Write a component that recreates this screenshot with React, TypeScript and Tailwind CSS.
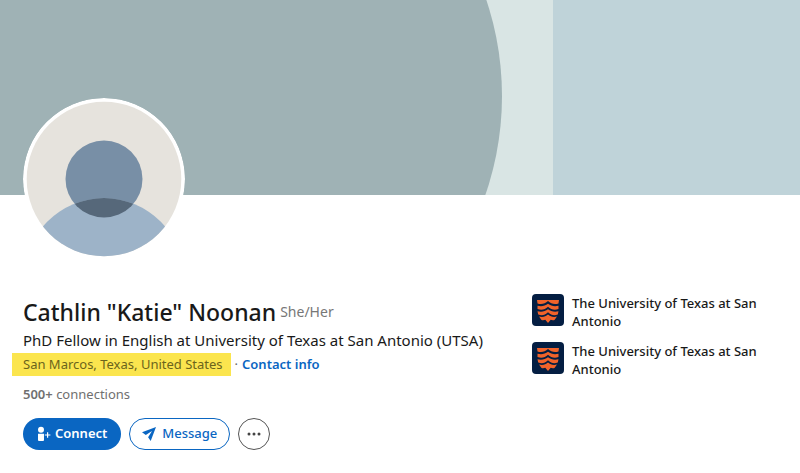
import type { ReactNode } from "react";

type School = {
  id: number;
  name: string;
};

const SCHOOLS: School[] = [
  { id: 1, name: "The University of Texas at San Antonio" },
  { id: 2, name: "The University of Texas at San Antonio" },
];

function CoverArt() {
  return (
    <svg
      className="block h-[195px] w-full"
      viewBox="0 0 800 195"
      preserveAspectRatio="xMidYMid slice"
      aria-hidden="true"
    >
      <rect width="800" height="195" fill="#d9e5e4" />
      <rect x="553" width="247" height="195" fill="#bfd3d9" />
      <circle cx="200" cy="96" r="302" fill="#9fb2b5" />
    </svg>
  );
}

function Avatar() {
  return (
    <svg
      className="relative -mt-[97px] block size-[162px] rounded-full"
      viewBox="0 0 162 162"
      role="img"
      aria-label="Profile photo"
    >
      <defs>
        <clipPath id="avatar-face">
          <circle cx="81" cy="81" r="77.3" />
        </clipPath>
        <clipPath id="avatar-head">
          <circle cx="81" cy="81" r="38.5" />
        </clipPath>
      </defs>
      <circle cx="81" cy="81" r="81" fill="#fff" />
      <g clipPath="url(#avatar-face)">
        <rect width="162" height="162" fill="#e6e3dd" />
        <circle cx="81" cy="81" r="38.5" fill="#788fa6" />
        <circle cx="81" cy="180.5" r="80.4" fill="#9db3c8" />
        <g clipPath="url(#avatar-head)">
          <circle cx="81" cy="180.5" r="80.4" fill="#56687a" />
        </g>
      </g>
    </svg>
  );
}

function SchoolLogo() {
  return (
    <svg className="size-8 shrink-0 rounded" viewBox="0 0 32 32" aria-hidden="true">
      <rect width="32" height="32" fill="#041e42" />
      <g fill="#f1632a">
        <path d="M5 6h22l-.5 3.500c-4 1.200-7.500.4-10.500-2.500-3 2.900-6.500 3.700-10.500 2.500z" />
        <path d="M5.500 11.700c4 1 7.500.3 10.500-2 3 2.300 6.500 3 10.500 2v3.300c-4 1.400-7.500.6-10.500-2.300-3 2.900-6.500 3.700-10.500 2.300z" />
        <path d="M5.500 17.200c4 1 7.500.3 10.500-2 3 2.300 6.500 3 10.500 2L25.800 20.500c-3.800 1.400-6.800.6-9.800-2.200-3 2.800-6 3.600-9.800 2.200z" />
        <path d="M7 22.500c3.500 1 6.500.2 9-2 2.500 2.200 5.500 3 9 2L22.500 26c-1.500.4-2.800.2-3.800-.3L16 29l-2.700-3.300c-1 .5-2.300.7-3.800.3z" />
      </g>
    </svg>
  );
}

function ConnectIcon() {
  return (
    <svg className="h-4 w-3.5" viewBox="0 0 14 16" fill="currentColor" aria-hidden="true">
      <circle cx="4" cy="3.800" r="3" />
      <path d="M1 7.800h6V14a1 1 0 0 1-1 1H2a1 1 0 0 1-1-1z" />
      <path d="M10 6.200h1.200v2.200h2.200v1.200h-2.200v2.200H10V9.600H7.800V8.400H10z" />
    </svg>
  );
}

function SendIcon() {
  return (
    <svg className="size-3.5" viewBox="0 0 14 14" fill="currentColor" aria-hidden="true">
      <path d="M14 0 0 5.300l3.800 2.600L10 4 6.100 10.200 8.700 14z" />
    </svg>
  );
}

function DotsIcon() {
  return (
    <svg className="h-4 w-3.5" viewBox="0 0 14 16" fill="currentColor" aria-hidden="true">
      <circle cx="2" cy="8" r="1.500" />
      <circle cx="7" cy="8" r="1.500" />
      <circle cx="12" cy="8" r="1.500" />
    </svg>
  );
}

function PillButton({ primary = false, children }: { primary?: boolean; children: ReactNode }) {
  return (
    <button
      type="button"
      className={
        primary
          ? "flex h-8 items-center gap-1 rounded-full bg-[#0a66c2] px-3.5 text-[13px] font-semibold text-white"
          : "flex h-8 items-center gap-1.5 rounded-full border border-[#0a66c2] px-3 text-[13px] font-medium text-[#0a66c2]"
      }
    >
      {children}
    </button>
  );
}

export default function App() {
  return (
    <main className="min-h-screen bg-white font-['Noto_Sans',sans-serif] text-[#191919]">
      <CoverArt />
      <div className="px-[23px]">
        <Avatar />
        <div className="mt-8 flex items-start justify-between gap-4">
          <section className="min-w-0">
            <div className="flex items-center gap-1 pt-1">
              <h1 className="text-[23px] leading-8 font-medium">Cathlin "Katie" Noonan</h1>
              <span className="text-sm text-[#777]">She/Her</span>
            </div>
            <p className="text-[15px] leading-[25px]">
              PhD Fellow in English at University of Texas at San Antonio (UTSA)
            </p>
            <p className="-ml-[11px] flex items-center text-[13px] leading-[23px]">
              <mark className="bg-[#fbe54e] pr-2 pl-[11px] text-[#6b641c]">
                San Marcos, Texas, United States
              </mark>
              <span className="px-1 text-[#666]">·</span>
              <a href="#contact" className="font-semibold text-[#0a66c2]">
                Contact info
              </a>
            </p>
            <p className="mt-2 text-[13px] leading-5 text-[#707070]">
              <span className="font-semibold">500+</span> connections
            </p>
            <div className="mt-3.5 flex gap-2">
              <PillButton primary>
                <ConnectIcon />
                Connect
              </PillButton>
              <PillButton>
                <SendIcon />
                Message
              </PillButton>
              <button
                type="button"
                aria-label="More actions"
                className="flex size-8 items-center justify-center rounded-full border border-[#555] text-[#444]"
              >
                <DotsIcon />
              </button>
            </div>
          </section>
          <ul className="flex w-[245px] shrink-0 flex-col gap-3 pt-0.5">
            {SCHOOLS.map((school) => (
              <li key={school.id} className="flex gap-2">
                <SchoolLogo />
                <span className="text-[13px] leading-[18px] font-medium">{school.name}</span>
              </li>
            ))}
          </ul>
        </div>
      </div>
    </main>
  );
}
